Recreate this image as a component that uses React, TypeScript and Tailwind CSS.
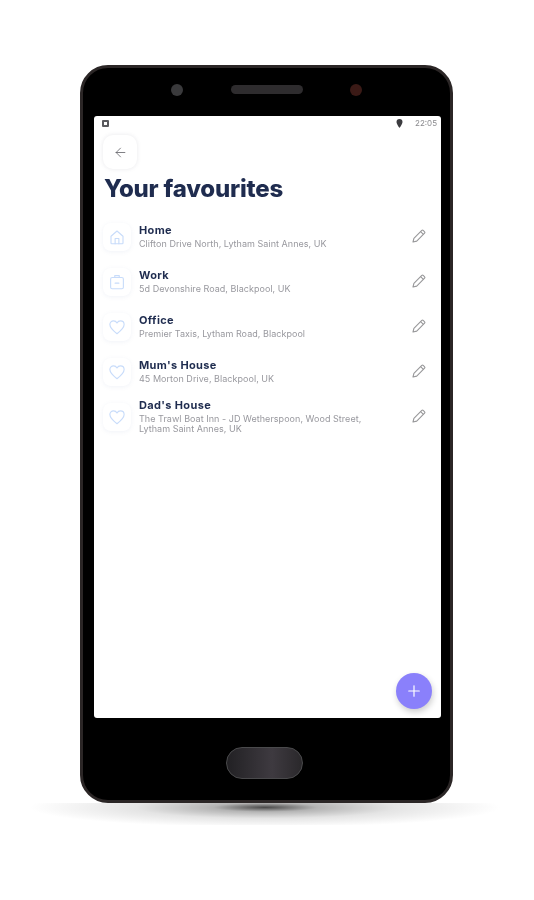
import React from 'react';
import { ArrowLeft, Plus } from 'lucide-react';

type Favourite = {
  name: string;
  address: string[];
  icon: 'home' | 'work' | 'heart';
};

const FAVOURITES: Favourite[] = [
  { name: 'Home', address: ['Clifton Drive North, Lytham Saint Annes, UK'], icon: 'home' },
  { name: 'Work', address: ['5d Devonshire Road, Blackpool, UK'], icon: 'work' },
  { name: 'Office', address: ['Premier Taxis, Lytham Road, Blackpool'], icon: 'heart' },
  { name: "Mum's House", address: ['45 Morton Drive, Blackpool, UK'], icon: 'heart' },
  {
    name: "Dad's House",
    address: ['The Trawl Boat Inn - JD Wetherspoon, Wood Street,', 'Lytham Saint Annes, UK'],
    icon: 'heart',
  },
];

const PlaceIcon = ({ icon }: { icon: Favourite['icon'] }) => (
  <svg width="18" height="18" viewBox="0 0 24 24" fill="none" stroke="#c8dcfa" strokeWidth="1.5" strokeLinecap="round" strokeLinejoin="round">
    {icon === 'home' && (
      <>
        <path d="M4 11l8-7 8 7v9a1 1 0 0 1-1 1H5a1 1 0 0 1-1-1z" />
        <path d="M9.5 21v-7h5v7" />
      </>
    )}
    {icon === 'work' && (
      <>
        <rect x="3.5" y="6" width="17" height="15" rx="2" />
        <path d="M9 6V3.5h6V6" />
        <path d="M9.5 13.5h5" />
      </>
    )}
    {icon === 'heart' && (
      <path d="M12 21C6 16.5 2.5 13 2.5 8.8 2.5 5.8 4.8 3.8 7.4 3.8c1.9 0 3.6 1 4.6 2.8 1-1.8 2.7-2.8 4.6-2.8 2.6 0 4.9 2 4.9 5 0 4.2-3.5 7.7-9.5 12.2z" />
    )}
  </svg>
);

const PencilIcon = () => (
  <svg className="mb-[2px]" width="16" height="16" viewBox="0 0 16 16" fill="none" stroke="#98989a" strokeWidth="1.1" strokeLinejoin="round">
    <path d="M2 14l.9-3.7 7.9-7.9a1 1 0 0 1 1.4 0l1.4 1.4a1 1 0 0 1 0 1.4l-7.9 7.9z" />
    <path d="M9.6 3.6l2.8 2.8" />
  </svg>
);

const FavouriteRow = ({ item }: { item: Favourite }) => (
  <div className="flex h-[45px] items-center pl-[9px] pr-[14px]">
    <div className="flex h-[28px] w-[28px] shrink-0 items-center justify-center rounded-lg bg-white shadow-[0_1px_4px_rgba(120,140,190,0.1)]">
      <PlaceIcon icon={item.icon} />
    </div>
    <div className="ml-[8px] flex-1">
      <div className="mb-[2px] text-[11px] leading-[13px] font-bold tracking-[0.35px] text-[#1f2c4f]">{item.name}</div>
      {item.address.map((line) => (
        <div key={line} className="text-[9px] leading-[10px] tracking-[0.04px] text-[#98989e]">
          {line}
        </div>
      ))}
    </div>
    <PencilIcon />
  </div>
);

export default function App() {
  return (
    <div className="h-[900px] w-[534px] overflow-hidden bg-white pt-[65px] pl-[80px] font-['Inter',sans-serif] blur-[0.6px]">
      {/* Phone body */}
      <div className="h-[738px] w-[373px] rounded-[28px] border-[3px] border-[#2b2626] bg-black">
        {/* Earpiece and cameras */}
        <div className="flex h-[48px] items-center pb-[5px] pl-[88px]">
          <div className="h-[12px] w-[12px] rounded-full bg-[#3a3a3c]" />
          <div className="ml-[48px] h-[9px] w-[72px] rounded-full bg-[#2e2c2e]" />
          <div className="ml-[47px] h-[12px] w-[12px] rounded-full bg-[#3b1a16]" />
        </div>

        {/* Screen */}
        <div className="relative mr-[9px] ml-[11px] h-[602px] rounded-[3px] bg-white">
          <div className="flex h-[14px] items-center pr-[4px] pl-[8px] text-[8px] text-[#8a8a8e]">
            <div className="h-[7px] w-[7px] rounded-[1px] border-2 border-[#5a5a5e]" />
            <svg className="ml-auto" width="7" height="9" viewBox="0 0 7 9">
              <path d="M3.5 0a3 3 0 0 1 3 3c0 2-3 6-3 6s-3-4-3-6a3 3 0 0 1 3-3z" fill="#3c3c40" />
            </svg>
            <span className="ml-[12px]">22:05</span>
          </div>

          <div className="mt-[5px] ml-[9px] flex h-[34px] w-[34px] items-center justify-center rounded-[10px] bg-white shadow-[0_0_4px_rgba(90,90,110,0.14)]">
            <ArrowLeft size={15} strokeWidth={1.2} color="#55555c" />
          </div>

          <h1 className="mt-[5px] ml-[10px] text-[24px] leading-[30px] font-extrabold tracking-[-0.2px] text-[#1f2c4f]">
            Your favourites
          </h1>

          <div className="mt-[10px]">
            {FAVOURITES.map((item) => (
              <FavouriteRow key={item.name} item={item} />
            ))}
          </div>

          {/* Add button */}
          <div className="absolute right-[9px] bottom-[9px] flex h-[36px] w-[36px] items-center justify-center rounded-full bg-[#8a80fb] shadow-[1px_3px_6px_rgba(0,0,0,0.2)]">
            <Plus size={18} strokeWidth={1.6} color="#ffffff" />
          </div>
        </div>

        {/* Home button */}
        <div className="mt-[29px] ml-[143px] h-[32px] w-[77px] rounded-full border border-[#4a4a4c] bg-[linear-gradient(90deg,#222124,#3e3a40_60%,#2a282b)]" />
      </div>

      {/* Shadow under the phone */}
      <div className="-ml-[50px] h-[22px] w-[470px] bg-[radial-gradient(ellipse_50%_90%_at_50%_20%,#4a4a4a,#b4b4b4_22%,#e4e4e4_55%,#ffffff_100%)]" />
    </div>
  );
}
